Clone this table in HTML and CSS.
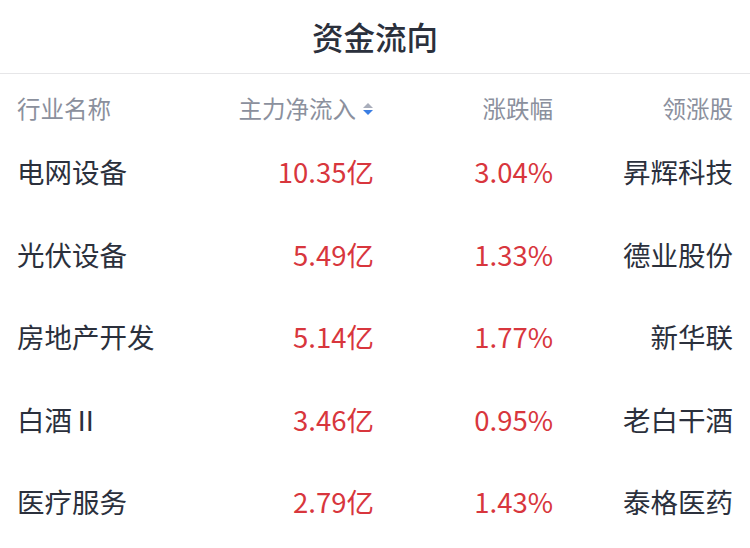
FILE: index.html
```html
<!DOCTYPE html>
<html lang="zh-CN">
<head>
<meta charset="utf-8">
<link rel="stylesheet" href="styles.css">
</head>
<body>
<div class="page">
  <div class="title">资金流向</div>
  <div class="table">
    <div class="row head">
      <div class="c1">行业名称</div>
      <div class="c2">主力净流入<svg class="sort" width="12" height="14" viewBox="0 0 12 14"><path d="M6 1 L11 6 L1 6 Z" fill="#a9aebb"/><path d="M1 8 L11 8 L6 13 Z" fill="#3b7ee3"/></svg></div>
      <div class="c3">涨跌幅</div>
      <div class="c4">领涨股</div>
    </div>
    <div class="row">
      <div class="c1">电网设备</div>
      <div class="c2 up">10.35亿</div>
      <div class="c3 up">3.04%</div>
      <div class="c4">昇辉科技</div>
    </div>
    <div class="row">
      <div class="c1">光伏设备</div>
      <div class="c2 up">5.49亿</div>
      <div class="c3 up">1.33%</div>
      <div class="c4">德业股份</div>
    </div>
    <div class="row">
      <div class="c1">房地产开发</div>
      <div class="c2 up">5.14亿</div>
      <div class="c3 up">1.77%</div>
      <div class="c4">新华联</div>
    </div>
    <div class="row">
      <div class="c1">白酒Ⅱ</div>
      <div class="c2 up">3.46亿</div>
      <div class="c3 up">0.95%</div>
      <div class="c4">老白干酒</div>
    </div>
    <div class="row">
      <div class="c1">医疗服务</div>
      <div class="c2 up">2.79亿</div>
      <div class="c3 up">1.43%</div>
      <div class="c4">泰格医药</div>
    </div>
  </div>
</div>
</body>
</html>
```
FILE: styles.css
```css
* { box-sizing: border-box; }
html, body { margin: 0; padding: 0; background: #fff; }
body {
  font-family: "Noto Sans CJK SC", "Noto Sans", sans-serif;
  color: #2b303c;
  width: 750px;
  height: 548px;
  overflow: hidden;
}
.title {
  height: 74px;
  border-bottom: 1px solid #e6e6e8;
  display: flex;
  align-items: center;
  justify-content: center;
  font-size: 31.5px;
  font-weight: 500;
  color: #2b303c;
  padding-bottom: 1px;
}
.table { padding: 0 17px; }
.row {
  display: grid;
  grid-template-columns: 177px 180px 179px 1fr;
  height: 82.5px;
  align-items: center;
  font-size: 27.5px;
  line-height: 30px;
}
.row.head {
  height: 56px;
  align-items: start;
  padding-top: 20px;
  font-size: 23.5px;
  line-height: 28px;
  color: #8b909d;
}
.c2, .c3, .c4 { text-align: right; }
.c2 { display: flex; justify-content: flex-end; align-items: center; }
.sort { margin-left: 6px; margin-top: 2px; }
.up { color: #d8363d; }
```
